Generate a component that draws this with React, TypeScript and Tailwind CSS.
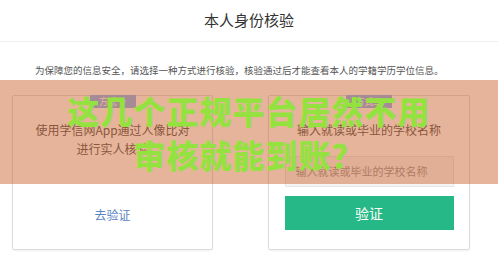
import React from 'react';

const font = { fontFamily: '"Noto Sans CJK SC", "Noto Sans", sans-serif' };

function Tab({ label }: { label: string }) {
  return (
    <div className="-mt-px w-[46px] h-[13px] bg-[#8ab4f8] text-white text-[9px] leading-[13px] text-center">
      {label}
    </div>
  );
}

export default function App() {
  return (
    <div className="relative w-[498px] h-[264px] bg-white overflow-hidden text-[#333]" style={font}>
      {/* header */}
      <div className="h-[42px] border-b border-[#eeeeee] flex items-center justify-center">
        <span className="text-[15px] text-[#333]">本人身份核验</span>
      </div>

      <p className="mt-[22px] pl-[35px] text-[9.5px] leading-[12px] text-[#555]">
        为保障您的信息安全，请选择一种方式进行核验，核验通过后才能查看本人的学籍学历学位信息。
      </p>

      {/* cards */}
      <div className="mt-[19px] pl-[12px] flex gap-[55px]">
        <div className="w-[201px] h-[155px] border border-[#dddddd] rounded-[2px] shadow-[0_1px_2px_rgba(0,0,0,0.06)] flex flex-col items-center">
          <Tab label="方式一" />
          <div className="mt-[12px] text-[12px] leading-[19px] text-[#555] text-center">
            <div>使用学信网App通过人像比对</div>
            <div>进行实人核验</div>
          </div>
          <div className="mt-auto mb-[26px] text-[12px] leading-[16px] text-[#5b84c4]">去验证</div>
        </div>

        <div className="w-[202px] h-[155px] border border-[#dddddd] rounded-[2px] shadow-[0_1px_2px_rgba(0,0,0,0.06)] flex flex-col items-center">
          <Tab label="方式二" />
          <div className="mt-[12px] text-[12px] leading-[19px] text-[#555] text-center">
            输入就读或毕业的学校名称
          </div>
          <div className="mt-[17px] w-[169px] h-[31px] bg-[#f6f6f6] border border-[#e6e6e6] px-[10px] flex items-center text-[11px] text-[#999]">
            输入就读或毕业的学校名称
          </div>
          <div className="mt-[9px] w-[169px] h-[34px] bg-[#26b886] flex items-center justify-center text-[14px] text-white">
            验证
          </div>
        </div>
      </div>

      {/* overlay banner */}
      <div className="absolute left-0 right-0 top-[80px] h-[104px] bg-[rgba(199,88,33,0.45)] flex flex-col items-center justify-center">
        <div className="text-[32px] leading-[44px] font-black text-[#93e23f] tracking-[1px]">这几个正规平台居然不用</div>
        <div className="text-[32px] leading-[44px] font-black text-[#93e23f] tracking-[1px]">审核就能到账？</div>
      </div>
    </div>
  );
}
